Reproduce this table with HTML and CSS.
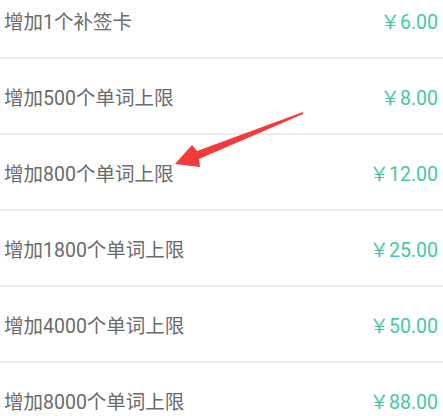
FILE: index.html
```html
<!DOCTYPE html>
<html>
<head>
<meta charset="utf-8">
<link rel="stylesheet" href="styles.css">
</head>
<body>
<div class="page">
  <ul class="list">
    <li class="row"><span class="name">增加1个补签卡</span><span class="price">￥6.00</span></li>
    <li class="row"><span class="name">增加500个单词上限</span><span class="price">￥8.00</span></li>
    <li class="row"><span class="name">增加800个单词上限</span><span class="price">￥12.00</span></li>
    <li class="row"><span class="name">增加1800个单词上限</span><span class="price">￥25.00</span></li>
    <li class="row"><span class="name">增加4000个单词上限</span><span class="price">￥50.00</span></li>
    <li class="row"><span class="name">增加8000个单词上限</span><span class="price">￥88.00</span></li>
  </ul>
  <svg class="arrow" width="443" height="416" viewBox="0 0 443 416">
    <polygon points="303,112 197,151 192,145 175,164 200,167 199,159 303,114" fill="#f43a3a"/>
  </svg>
</div>
</body>
</html>
```

FILE: styles.css
```css
html, body {
  margin: 0;
  padding: 0;
  background: #ffffff;
  overflow: hidden;
}
.page {
  position: relative;
  width: 443px;
  height: 416px;
  overflow: hidden;
}
.list {
  list-style: none;
  margin: -17px 0 0 0;
  padding: 0;
}
.row {
  height: 74px;
  border-bottom: 2px solid #ececec;
  display: flex;
  align-items: center;
  justify-content: space-between;
  padding: 0 5px 0 4px;
  font-family: Roboto, "Noto Sans CJK SC", sans-serif;
  font-size: 19.5px;
}
.name {
  color: #6b6b6b;
}
.price {
  color: #45c9a2;
}
.arrow {
  position: absolute;
  left: 0;
  top: 0;
  pointer-events: none;
}
```
